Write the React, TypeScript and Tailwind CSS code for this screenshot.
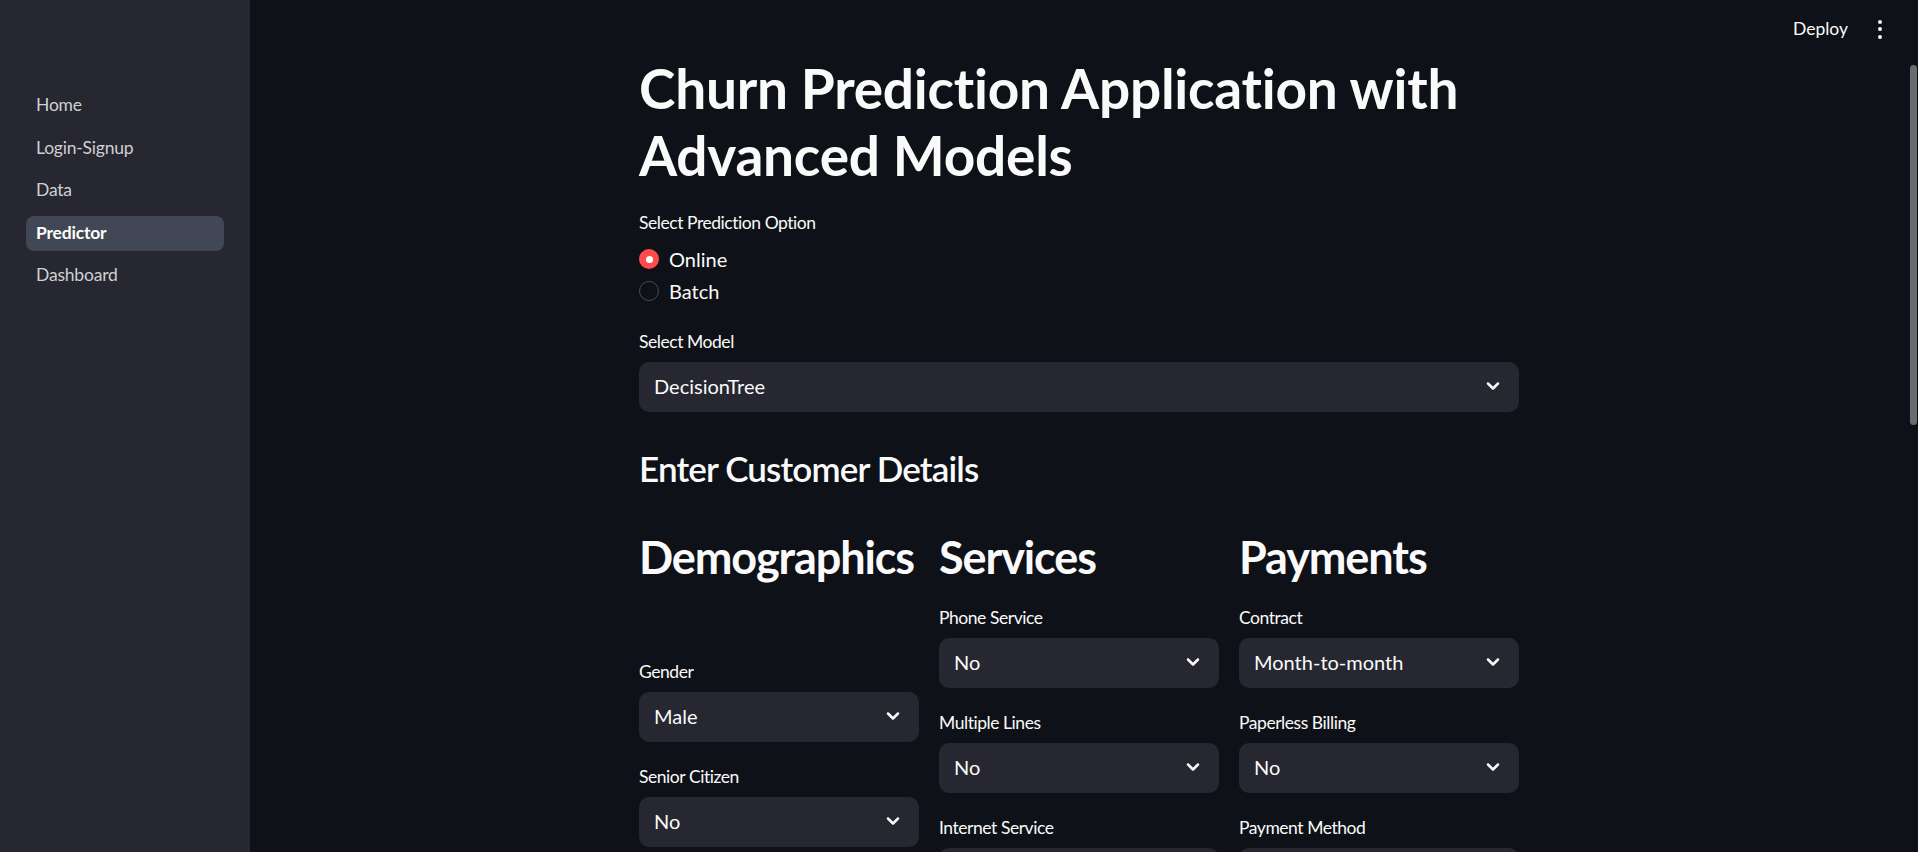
import { ChevronDown } from 'lucide-react'

// Streamlit dark theme, rendered at 125% zoom
const navItems = ['Home', 'Login-Signup', 'Data', 'Predictor', 'Dashboard']

function Label({ text }: { text: string }) {
  return <div className="h-[30px] flex items-center text-[17.5px] tracking-[-0.45px] text-[#fafafa]">{text}</div>
}

function Select({ value }: { value?: string }) {
  return (
    <div className="mt-[5px] h-[50px] rounded-[10px] bg-[#262730] pl-[15px] pr-[16px] pb-[2px] flex items-center justify-between text-[20px] text-[#fafafa]">
      <span>{value}</span>
      <ChevronDown size={20} strokeWidth={3} className="text-[#fafafa]" />
    </div>
  )
}

function Field({ label, value, first }: { label: string; value?: string; first?: boolean }) {
  return (
    <div className={first ? '' : 'mt-[20px]'}>
      <Label text={label} />
      <Select value={value} />
    </div>
  )
}

export default function App() {
  return (
    <div className="flex h-[852px] w-full overflow-hidden bg-[#0e1117] font-['Lato',sans-serif] text-[#fafafa]">
      {/* Sidebar */}
      <aside className="w-[250px] shrink-0 bg-[#262730] pt-[88px] px-[26px] flex flex-col gap-[7.5px]">
        {navItems.map((item) => (
          <div
            key={item}
            className={
              item === 'Predictor'
                ? 'h-[35px] rounded-[8px] bg-[#424755] pl-[10px] flex items-center text-[17.5px] tracking-[-0.2px] font-bold text-white'
                : 'h-[35px] pl-[10px] flex items-center text-[17.5px] tracking-[-0.2px] text-[#d0d0d3]'
            }
          >
            {item}
          </div>
        ))}
      </aside>

      {/* Main */}
      <main className="relative flex-1 flex">
        {/* Top-right toolbar */}
        <div className="absolute top-[16px] right-[36px] flex items-center gap-[30px]">
          <span className="text-[17.5px] text-[#fafafa]">Deploy</span>
          <div className="flex flex-col gap-[3.5px]">
            <span className="w-[4px] h-[4px] rounded-full bg-[#fafafa]" />
            <span className="w-[4px] h-[4px] rounded-full bg-[#fafafa]" />
            <span className="w-[4px] h-[4px] rounded-full bg-[#fafafa]" />
          </div>
        </div>

        <div className="flex-1 flex justify-center">
          <div className="w-[880px] pt-[55px]">
            <h1 className="text-[55px] leading-[67px] font-bold tracking-[-0.25px] text-[#fafafa]">
              Churn Prediction Application with Advanced Models
            </h1>

            <div className="mt-[19px]">
              <Label text="Select Prediction Option" />
            </div>
            <div className="mt-[5px]">
              <div className="h-[32px] flex items-center gap-[10px] text-[20px]">
                <span className="w-[20px] h-[20px] rounded-full bg-[#ff4b4b] flex items-center justify-center">
                  <span className="w-[7px] h-[7px] rounded-full bg-white" />
                </span>
                Online
              </div>
              <div className="h-[32px] flex items-center gap-[10px] text-[20px]">
                <span className="w-[20px] h-[20px] rounded-full border-[1.5px] border-[#4a4c54]" />
                Batch
              </div>
            </div>

            <div className="mt-[20px]">
              <Field label="Select Model" value="DecisionTree" first />
            </div>

            <h3 className="mt-[35px] text-[35px] leading-[42px] font-semibold tracking-[-0.85px]">Enter Customer Details</h3>

            <div className="mt-[38px] grid grid-cols-3 gap-x-[20px]">
              <div>
                <h2 className="mt-[3px] text-[45px] leading-[54px] font-bold tracking-[-1.1px]">Demographics</h2>
                <div className="mt-[73px]">
                  <Field label="Gender" value="Male" first />
                  <Field label="Senior Citizen" value="No" />
                </div>
              </div>
              <div>
                <h2 className="mt-[3px] text-[45px] leading-[54px] font-bold tracking-[-1.1px]">Services</h2>
                <div className="mt-[19px]">
                  <Field label="Phone Service" value="No" first />
                  <Field label="Multiple Lines" value="No" />
                  <Field label="Internet Service" />
                </div>
              </div>
              <div>
                <h2 className="mt-[3px] text-[45px] leading-[54px] font-bold tracking-[-1.1px]">Payments</h2>
                <div className="mt-[19px]">
                  <Field label="Contract" value="Month-to-month" first />
                  <Field label="Paperless Billing" value="No" />
                  <Field label="Payment Method" />
                </div>
              </div>
            </div>
          </div>
        </div>

        {/* Scrollbar */}
        <div className="w-[10px] shrink-0 pt-[65px] pl-[2px]">
          <div className="w-[7px] h-[360px] rounded-full bg-[#6c6c70]" />
        </div>
      </main>
    </div>
  )
}
